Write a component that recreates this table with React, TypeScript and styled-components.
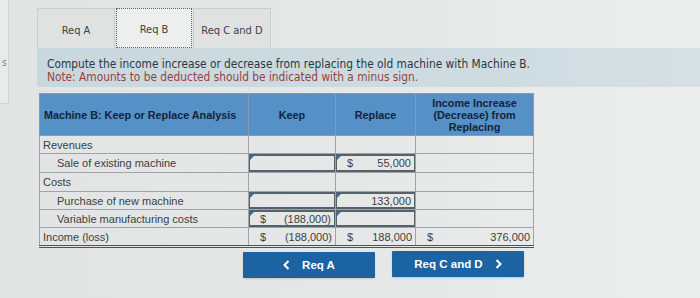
import React from 'react';
import styled, { createGlobalStyle } from 'styled-components';

const GlobalStyle = createGlobalStyle`
  html, body {
    margin: 0;
    padding: 0;
    background: #e4e6e5;
  }
  body {
    width: 700px;
    height: 298px;
    overflow: hidden;
    background: linear-gradient(90deg, #e2e4e3 0%, #e7e9e8 60%, #eceeed 100%);
  }
`;

const Page = styled.div`
  display: flex;
  height: 298px;
`;

const SideStrip = styled.div`
  width: 9px;
  height: 104px;
  border-right: 1px solid #cfd3d3;
  border-bottom: 1px solid #cfd3d3;
  background: #e9ebeb;
  font-family: 'DejaVu Sans Condensed', sans-serif;
  font-size: 10px;
  color: #7a8286;
  padding: 57px 0 0 2px;
  box-sizing: border-box;
  overflow: hidden;
`;

const Main = styled.div`
  flex: 1;
  padding: 8px 0 0 28px;
  display: flex;
  flex-direction: column;
`;

const TabBar = styled.div`
  display: flex;
  height: 40px;
`;

const Tab = styled.div<{ active?: boolean }>`
  width: ${({ active }) => (active ? '76px' : '78px')};
  display: flex;
  align-items: center;
  justify-content: center;
  font-family: 'DejaVu Sans Condensed', sans-serif;
  font-size: 11px;
  color: #3b4247;
  background: ${({ active }) => (active ? '#edefee' : '#dfe2e1')};
  border: ${({ active }) => (active ? '1px dotted #5a6066' : '1px solid #c9cdcc')};
  border-bottom: ${({ active }) => (active ? '1px dotted #5a6066' : 'none')};
  margin-left: ${({ active }) => (active ? '1px' : '0')};
  margin-right: ${({ active }) => (active ? '1px' : '0')};
  box-sizing: border-box;
  padding-top: 3px;
`;

const Instructions = styled.div`
  height: 39px;
  background: linear-gradient(90deg, #c9d8de 0%, #cedce1 70%, #d7e0e3 100%);
  padding: 10px 0 0 10px;
  box-sizing: border-box;
  font-family: 'DejaVu Sans Condensed', sans-serif;
  font-size: 11.8px;
  line-height: 12.5px;
`;

const Prompt = styled.div`
  color: #2b3640;
`;

const Note = styled.div`
  color: #9a3e3c;
`;

const Table = styled.table`
  margin: 6px 0 0 2px;
  border-collapse: collapse;
  table-layout: fixed;
  width: 494px;
  font-family: 'Liberation Sans', Arial, sans-serif;
  font-size: 11px;
  color: #3a3f42;
`;

const HeadCell = styled.th<{ align?: string }>`
  background: #5590c6;
  color: #12243a;
  font-weight: bold;
  height: 41px;
  padding: 0 4px;
  border: 1px solid #8a9aa8;
  text-align: ${({ align }) => align || 'center'};
  line-height: 12px;
  font-size: 10.8px;
`;

const Row = styled.tr<{ h: number }>`
  height: ${({ h }) => h}px;
`;

const Label = styled.td<{ indent?: boolean; total?: boolean }>`
  border: 1px solid #9ea4a7;
  border-bottom: ${({ total }) => (total ? '3px double #4d5459' : '1px solid #9ea4a7')};
  padding: 0 0 0 ${({ indent }) => (indent ? '17px' : '3px')};
  white-space: nowrap;
`;

const Cell = styled.td<{ total?: boolean }>`
  border: 1px solid #9ea4a7;
  border-bottom: ${({ total }) => (total ? '3px double #4d5459' : '1px solid #9ea4a7')};
  padding: 0;
  position: relative;
`;

const Amount = styled.div`
  display: flex;
  justify-content: space-between;
  align-items: center;
  padding: 0 3px 0 11px;
  height: 100%;
`;

const InputBox = styled.div`
  position: absolute;
  inset: 0;
  border: 2px solid #56626b;
  border-left-width: 1px;
  border-right-width: 1px;
  display: flex;
  justify-content: space-between;
  align-items: center;
  padding: 0 3px 0 10px;
  box-sizing: border-box;

  &::before {
    content: '';
    position: absolute;
    top: 0;
    left: 0;
    border-top: 4px solid #2f6fae;
    border-right: 4px solid transparent;
  }
`;

const Buttons = styled.div`
  display: flex;
  gap: 17px;
  margin: 3px 0 0 206px;
  align-items: flex-start;
`;

const NavButton = styled.div<{ offset?: number }>`
  width: 132px;
  height: 26px;
  margin-top: ${({ offset }) => offset || 0}px;
  background: #1b63a3;
  border-radius: 1px;
  color: #ffffff;
  font-family: 'Liberation Sans', Arial, sans-serif;
  font-weight: bold;
  font-size: 11.5px;
  display: flex;
  align-items: center;
  justify-content: center;
  gap: 12px;
  box-shadow: 0 1px 2px rgba(0, 0, 0, 0.15);
`;

const Chevron = styled.svg`
  width: 7px;
  height: 10px;
  fill: none;
  stroke: #ffffff;
  stroke-width: 2;
`;

interface Line {
  label: string;
  indent?: boolean;
  h: number;
  keep?: string[];
  replace?: string[];
  diff?: string[];
  keepInput?: boolean;
  replaceInput?: boolean;
  total?: boolean;
}

const lines: Line[] = [
  { label: 'Revenues', h: 18 },
  { label: 'Sale of existing machine', indent: true, h: 19, keepInput: true, replace: ['$', '55,000'], replaceInput: true },
  { label: 'Costs', h: 19 },
  { label: 'Purchase of new machine', indent: true, h: 18, keepInput: true, replace: ['', '133,000'], replaceInput: true },
  { label: 'Variable manufacturing costs', indent: true, h: 18, keep: ['$', '(188,000)'], keepInput: true, replaceInput: true },
  { label: 'Income (loss)', h: 19, keep: ['$', '(188,000)'], replace: ['$', '188,000'], diff: ['$', '376,000'], total: true },
];

function renderValue(value: string[] | undefined, isInput?: boolean) {
  const parts = value || ['', ''];
  if (isInput) {
    return (
      <InputBox>
        <span>{parts[0]}</span>
        <span>{parts[1]}</span>
      </InputBox>
    );
  }
  if (!value) return null;
  return (
    <Amount>
      <span>{parts[0]}</span>
      <span>{parts[1]}</span>
    </Amount>
  );
}

export default function App() {
  return (
    <>
      <GlobalStyle />
      <Page>
        <SideStrip>s</SideStrip>
        <Main>
          <TabBar>
            <Tab>Req A</Tab>
            <Tab active>Req B</Tab>
            <Tab>Req C and D</Tab>
          </TabBar>
          <Instructions>
            <Prompt>Compute the income increase or decrease from replacing the old machine with Machine B.</Prompt>
            <Note>Note: Amounts to be deducted should be indicated with a minus sign.</Note>
          </Instructions>
          <Table>
            <colgroup>
              <col style={{ width: 209 }} />
              <col style={{ width: 87 }} />
              <col style={{ width: 80 }} />
              <col style={{ width: 118 }} />
            </colgroup>
            <thead>
              <tr>
                <HeadCell align="left">Machine B: Keep or Replace Analysis</HeadCell>
                <HeadCell>Keep</HeadCell>
                <HeadCell>Replace</HeadCell>
                <HeadCell>
                  Income Increase
                  <br />
                  (Decrease) from
                  <br />
                  Replacing
                </HeadCell>
              </tr>
            </thead>
            <tbody>
              {lines.map((line) => (
                <Row key={line.label} h={line.h}>
                  <Label indent={line.indent} total={line.total}>{line.label}</Label>
                  <Cell total={line.total}>{renderValue(line.keep, line.keepInput)}</Cell>
                  <Cell total={line.total}>{renderValue(line.replace, line.replaceInput)}</Cell>
                  <Cell total={line.total}>{renderValue(line.diff)}</Cell>
                </Row>
              ))}
            </tbody>
          </Table>
          <Buttons>
            <NavButton offset={1}>
              <Chevron viewBox="0 0 7 10">
                <path d="M5.5 1 L1.5 5 L5.5 9" />
              </Chevron>
              Req A
            </NavButton>
            <NavButton>
              Req C and D
              <Chevron viewBox="0 0 7 10">
                <path d="M1.5 1 L5.5 5 L1.5 9" />
              </Chevron>
            </NavButton>
          </Buttons>
        </Main>
      </Page>
    </>
  );
}
